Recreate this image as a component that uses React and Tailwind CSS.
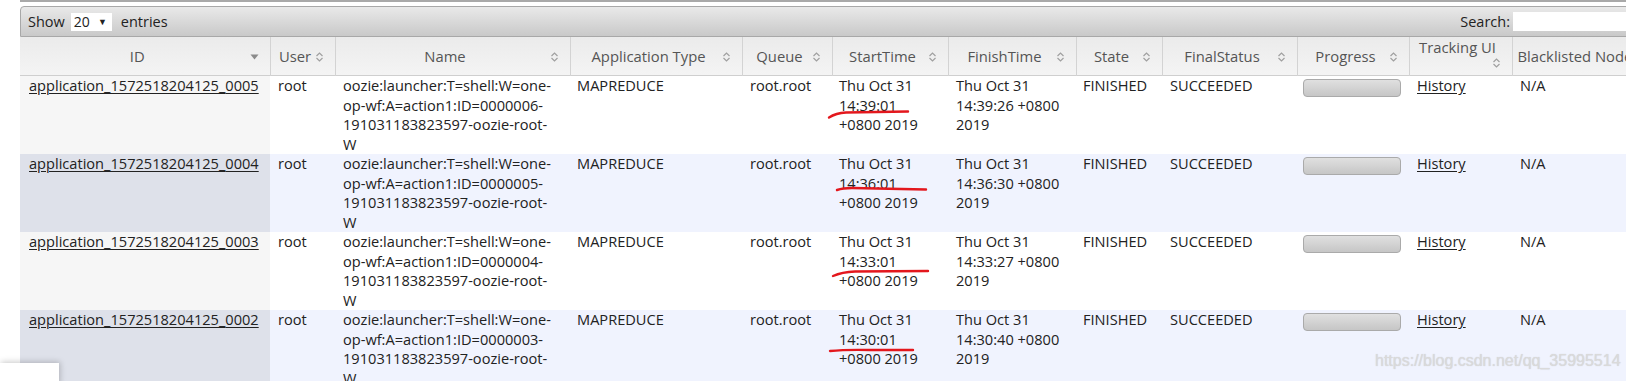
import React from "react";

const rows = [
  { id: "0005", n: "0000006", st: "14:39:01", ft: "14:39:26" },
  { id: "0004", n: "0000005", st: "14:36:01", ft: "14:36:30" },
  { id: "0003", n: "0000004", st: "14:33:01", ft: "14:33:27" },
  { id: "0002", n: "0000003", st: "14:30:01", ft: "14:30:40" },
];

function SortIcon() {
  return (
    <svg width="9" height="12" viewBox="0 0 9 12" className="shrink-0">
      <path d="M1.5 5 L4.5 2 L7.5 5" fill="none" stroke="#a0a0a0" strokeWidth="1.2" />
      <path d="M1.5 7 L4.5 10 L7.5 7" fill="none" stroke="#a0a0a0" strokeWidth="1.2" />
    </svg>
  );
}

function DownIcon() {
  return (
    <svg width="9" height="6" viewBox="0 0 9 6" className="shrink-0">
      <path d="M0.5 0.5 L8.5 0.5 L4.5 5.5 Z" fill="#8a8a8a" />
    </svg>
  );
}

function Th({ children, icon = "sort" }) {
  return (
    <th className="overflow-hidden border-r border-[#d3d3d3] p-0 font-normal align-top">
      <div className="flex h-[38px] items-center pl-[5px] pr-[11px] pt-[1px]">
        <span className="flex-1 text-center whitespace-nowrap">{children}</span>
        {icon === "down" ? <DownIcon /> : <SortIcon />}
      </div>
    </th>
  );
}

const cols = [250, 65, 235, 172, 90, 116, 128, 86, 135, 112, 103, 141];

export default function App() {
  return (
    <div className="relative h-[381px] w-[1626px] overflow-hidden bg-white font-['Open_Sans',sans-serif] text-[#222]">
      <div className="ml-[20px] w-[1633px]">
        <div className="h-[2px] bg-[#a9a9a9]" />
        <div className="mt-[4px] flex h-[31px] items-center justify-between rounded-tl-[4px] border border-[#a8a8a8] bg-gradient-to-b from-[#e9e9e9] to-[#c9c9c9] pl-[7px] pr-[4px] text-[14.5px]">
          <div className="flex items-center">
            <span>Show</span>
            <div className="ml-[6px] flex h-[18px] w-[41px] items-center justify-between bg-white pl-[3px] pr-[5px] text-[14px] leading-none">
              <span>20</span>
              <span className="text-[9px]">▼</span>
            </div>
            <span className="ml-[9px]">entries</span>
          </div>
          <div className="flex items-center">
            <span className="mr-[3px]">Search:</span>
            <div className="h-[19px] w-[135px] bg-white" />
          </div>
        </div>
        <table className="w-[1633px] table-fixed border-collapse text-left">
          <colgroup>
            {cols.map((w, i) => (
              <col key={i} style={{ width: w }} />
            ))}
          </colgroup>
          <thead>
            <tr className="border-b border-[#cfcfcf] bg-gradient-to-b from-[#ebebeb] to-[#f4f4f4] text-[14.8px] text-[#555]">
              <Th icon="down">ID</Th>
              <Th>User</Th>
              <Th>Name</Th>
              <Th>Application Type</Th>
              <Th>Queue</Th>
              <Th>StartTime</Th>
              <Th>FinishTime</Th>
              <Th>State</Th>
              <Th>FinalStatus</Th>
              <Th>Progress</Th>
              <th className="border-r border-[#d3d3d3] p-0 font-normal align-top">
                <div className="flex h-[38px] flex-col pl-[5px] pr-[11px] pt-[1px] leading-[19px]">
                  <span className="text-center whitespace-nowrap">Tracking UI</span>
                  <div className="flex justify-end">
                    <SortIcon />
                  </div>
                </div>
              </th>
              <Th>Blacklisted Nodes</Th>
            </tr>
          </thead>
          <tbody className="text-[14.6px] leading-[19.5px]">
            {rows.map((r, i) => {
              const even = i % 2 === 1;
              const idBg = even ? "bg-[#dee1ea]" : "bg-[#f6f6f6]";
              const bg = even ? "bg-[#f0f3fe]" : "bg-white";
              return (
                <tr key={r.id} className={`${bg} align-top`}>
                  <td className={`${idBg} h-[78px] py-0 pl-[9px]`}>
                    <a className="underline decoration-1 underline-offset-2">
                      application_1572518204125_{r.id}
                    </a>
                  </td>
                  <td className="py-0 pl-[8px]">root</td>
                  <td className="py-0 pl-[8px] whitespace-nowrap">
                    <div>oozie:launcher:T=shell:W=one-</div>
                    <div>op-wf:A=action1:ID={r.n}-</div>
                    <div>191031183823597-oozie-root-</div>
                    <div>W</div>
                  </td>
                  <td className="py-0 pl-[7px]">MAPREDUCE</td>
                  <td className="py-0 pl-[8px]">root.root</td>
                  <td className="py-0 pl-[7px] whitespace-nowrap">
                    <div>Thu Oct 31</div>
                    <div>{r.st}</div>
                    <div>+0800 2019</div>
                  </td>
                  <td className="py-0 pl-[8px] whitespace-nowrap">
                    <div>Thu Oct 31</div>
                    <div>{r.ft} +0800</div>
                    <div>2019</div>
                  </td>
                  <td className="py-0 pl-[7px]">FINISHED</td>
                  <td className="py-0 pl-[8px]">SUCCEEDED</td>
                  <td className="py-0 pl-[6px]">
                    <div className="mt-[3px] h-[18px] w-[98px] rounded-[4px] border border-[#aaa] bg-gradient-to-b from-[#e0e0e0] to-[#c6c6c6]" />
                  </td>
                  <td className="py-0 pl-[8px]">
                    <a className="underline decoration-1 underline-offset-2">History</a>
                  </td>
                  <td className="py-0 pl-[8px]">N/A</td>
                </tr>
              );
            })}
          </tbody>
        </table>
      </div>

      <svg className="pointer-events-none absolute left-0 top-0" width="1626" height="381">
        <g fill="none" stroke="#e3171d" strokeWidth="2.4" strokeLinecap="round">
          <path d="M829 117.5 Q836 113 846 112.5 L908 111.5" />
          <path d="M837 190 Q843 188 852 188 L926 189.5" />
          <path d="M833 276 Q842 272 855 271.5 L928 271" />
          <path d="M830 351 Q845 349.5 870 350 L913 350" />
        </g>
      </svg>

      <div className="absolute left-[1375px] top-[351px] font-['Liberation_Sans',sans-serif] text-[16px] leading-[20px] text-[#dadada] [text-shadow:0_0_1px_rgba(120,120,120,0.3)]">
        https://blog.csdn.net/qq_35995514
      </div>

      <div className="absolute left-0 top-[363px] h-[22px] w-[59px] bg-white shadow-[1px_-1px_6px_rgba(0,0,0,0.22)]" />
    </div>
  );
}
